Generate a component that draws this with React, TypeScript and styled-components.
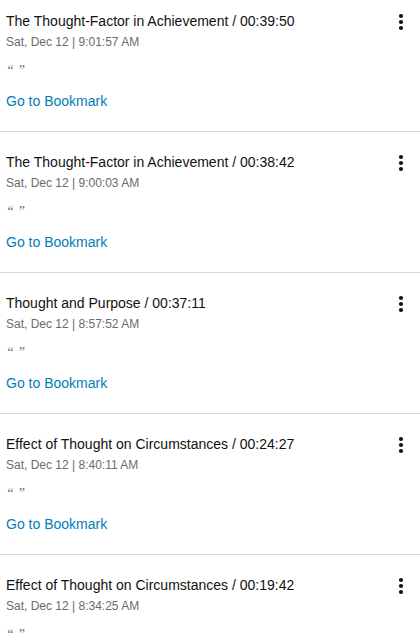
import React from "react";
import styled, { createGlobalStyle } from "styled-components";

const GlobalStyle = createGlobalStyle`
  *, *::before, *::after { box-sizing: border-box; }
  body {
    margin: 0;
    background: #fff;
    color: #111;
    font-family: "Liberation Sans", Arial, sans-serif;
    font-size: 14px;
  }
`;

const BookmarkList = styled.ul`
  height: 100vh;
  margin: 0;
  padding: 0;
  list-style: none;
  overflow-y: auto;
  scrollbar-width: none;
`;

const BookmarkItem = styled.li`
  display: flex;
  align-items: flex-start;
  justify-content: space-between;
  padding: 19px 6px 20px;
  border-bottom: 1px solid #d9d9d9;

  &:first-child {
    padding-top: 10px;
  }
`;

const Details = styled.div`
  min-width: 0;
`;

const Title = styled.h2`
  margin: 0;
  font-size: 14px;
  font-weight: 400;
  line-height: 22px;
`;

const Timestamp = styled.time`
  display: block;
  color: #6b6b6b;
  font-size: 12px;
  line-height: 20px;
`;

const Note = styled.p`
  margin: 9px 0 10px;
  color: #6b6b6b;
  font: italic 14px/20px "Liberation Serif", "Times New Roman", serif;
`;

const BookmarkLink = styled.a`
  display: block;
  color: #007eb9;
  line-height: 20px;
  text-decoration: none;

  &:hover {
    text-decoration: underline;
  }
`;

const MenuButton = styled.button`
  display: flex;
  flex: none;
  align-items: center;
  justify-content: center;
  width: 26px;
  height: 24px;
  padding: 0;
  border: 0;
  background: none;
  color: #111;
  cursor: pointer;
`;

const bookmarks = [
  { chapter: "The Thought-Factor in Achievement", position: "00:39:50", time: "9:01:57 AM" },
  { chapter: "The Thought-Factor in Achievement", position: "00:38:42", time: "9:00:03 AM" },
  { chapter: "Thought and Purpose", position: "00:37:11", time: "8:57:52 AM" },
  { chapter: "Effect of Thought on Circumstances", position: "00:24:27", time: "8:40:11 AM" },
  { chapter: "Effect of Thought on Circumstances", position: "00:19:42", time: "8:34:25 AM" },
];

function MoreIcon() {
  return (
    <svg width="6" height="18" viewBox="0 0 6 18" fill="currentColor" aria-hidden="true">
      <circle cx="3" cy="3" r="2.1" />
      <circle cx="3" cy="9" r="2.1" />
      <circle cx="3" cy="15" r="2.1" />
    </svg>
  );
}

export default function App() {
  return (
    <>
      <GlobalStyle />
      <BookmarkList>
        {bookmarks.map(({ chapter, position, time }) => (
          <BookmarkItem key={position}>
            <Details>
              <Title>{chapter} / {position}</Title>
              <Timestamp>Sat, Dec 12 | {time}</Timestamp>
              <Note>“ ”</Note>
              <BookmarkLink href={`#${position}`}>Go to Bookmark</BookmarkLink>
            </Details>
            <MenuButton type="button" aria-label={`Options for bookmark at ${position}`}>
              <MoreIcon />
            </MenuButton>
          </BookmarkItem>
        ))}
      </BookmarkList>
    </>
  );
}
